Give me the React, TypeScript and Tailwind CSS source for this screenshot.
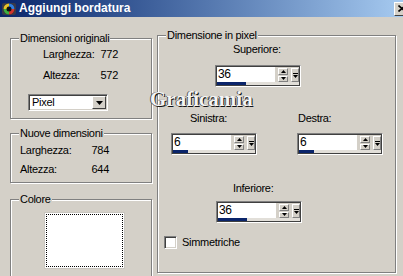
import type { ReactNode } from 'react';

const Group = ({ title, className, children }: { title: string; className: string; children?: ReactNode }) => (
  <div className={`relative border border-[#808080] shadow-[inset_1px_1px_0_#fff,1px_1px_0_#fff] ${className}`}>
    <span className="absolute left-[8px] top-[-7px] bg-[#d4d0c8] px-[1px] leading-[13px]">{title}</span>
    {children}
  </div>
);

const Tri = ({ up }: { up?: boolean }) => (
  <svg width="5" height="3" viewBox="0 0 5 3" className="block">
    <polygon points={up ? '2.5,0 5,3 0,3' : '0,0 5,0 2.5,3'} fill="#000" />
  </svg>
);

const SmallBtn = ({ up }: { up?: boolean }) => (
  <div className="h-[7px] flex items-center justify-center bg-[#d4d0c8] border border-t-white border-l-white border-r-[#808080] border-b-[#808080]">
    <Tri up={up} />
  </div>
);

const Spin = ({ value, fill }: { value: string; fill: number }) => (
  <div className="w-[86px] h-[22px] border border-t-[#808080] border-l-[#808080] border-r-white border-b-white shadow-[inset_1px_1px_0_#404040,inset_-1px_-1px_0_#404040] p-[1px] flex flex-col bg-[#d4d0c8]">
    <div className="h-[15px] flex">
      <div className="w-[58px] bg-white pl-[1px] text-[12px] leading-[15px]">{value}</div>
      <div className="w-[10px] ml-[3px] flex flex-col gap-[1px] pt-[1px]">
        <SmallBtn up />
        <SmallBtn />
      </div>
      <div className="w-[8px] ml-[3px] mt-[1px] h-[14px] flex flex-col items-center justify-center gap-[1px] bg-[#d4d0c8] border border-t-white border-l-white border-r-[#808080] border-b-[#808080]">
        <div className="w-[5px] h-[1px] bg-black" />
        <Tri />
      </div>
    </div>
    <div className="h-[3px] bg-[#e2dfd9] flex">
      <div className="h-full bg-[#0a246a]" style={{ width: fill }} />
    </div>
  </div>
);

const AppIcon = () => (
  <svg width="16" height="16" viewBox="0 0 16 16">
    <rect x="1" y="2" width="14" height="12" rx="2" fill="#3a3a48" />
    <circle cx="8" cy="8" r="5.5" fill="#1b1b24" />
    <path d="M8 2.5 A5.5 5.5 0 0 1 13.5 8 L8 8 Z" fill="#2f7de0" />
    <path d="M13.5 8 A5.5 5.5 0 0 1 8 13.5 L8 8 Z" fill="#d0342c" />
    <path d="M8 13.5 A5.5 5.5 0 0 1 2.5 8 L8 8 Z" fill="#3fae3f" />
    <path d="M2.5 8 A5.5 5.5 0 0 1 8 2.5 L8 8 Z" fill="#e8c22a" />
    <circle cx="8" cy="8" r="2.5" fill="#111" />
  </svg>
);

const ValueRow = ({ label, value, className }: { label: string; value: string; className: string }) => (
  <div className={`flex justify-between leading-[13px] ${className}`}>
    <span>{label}</span>
    <span>{value}</span>
  </div>
);

export default function App() {
  return (
    <div className="relative w-[403px] h-[276px] overflow-hidden bg-[#d4d0c8] text-black font-['Liberation_Sans',Arial,sans-serif] text-[11px] tracking-[-0.3px]">
      <div className="h-[17px] flex items-center bg-gradient-to-r from-[#0a246a] to-[#a6caf0]">
        <div className="ml-[1px]">
          <AppIcon />
        </div>
        <span className="ml-[2px] text-white font-bold text-[12px] tracking-normal leading-[17px]">Aggiungi bordatura</span>
        <div className="ml-auto mr-[-7px] w-[16px] h-[14px] flex items-center justify-center bg-[#d4d0c8] border border-t-white border-l-white border-r-[#404040] border-b-[#404040]">
          <svg width="8" height="7" viewBox="0 0 8 7">
            <path d="M0.5 0.5 L7.5 6.5 M7.5 0.5 L0.5 6.5" stroke="#000" strokeWidth="1.6" />
          </svg>
        </div>
      </div>

      <div className="flex pl-[10px] pt-[18px]">
        <div className="w-[142px] mt-[3px] flex flex-col">
          <Group title="Dimensioni originali" className="h-[81px] pt-[9px]">
            <ValueRow label="Larghezza:" value="772" className="ml-[32px] w-[75px]" />
            <ValueRow label="Altezza:" value="572" className="ml-[32px] w-[75px] mt-[8px]" />
            <div className="ml-[17px] mt-[12px] w-[80px] h-[17px] flex border border-t-[#808080] border-l-[#808080] border-r-white border-b-white shadow-[inset_1px_1px_0_#404040,inset_-1px_-1px_0_#d4d0c8] p-[1px] bg-white">
              <span className="flex-1 pl-[2px] leading-[13px]">Pixel</span>
              <div className="w-[14px] h-[13px] flex items-center justify-center bg-[#d4d0c8] border border-t-white border-l-white border-r-[#404040] border-b-[#404040]">
                <svg width="7" height="4" viewBox="0 0 7 4">
                  <polygon points="0,0 7,0 3.5,4" fill="#000" />
                </svg>
              </div>
            </div>
          </Group>

          <Group title="Nuove dimensioni" className="h-[50px] mt-[14px] pt-[10px]">
            <ValueRow label="Larghezza:" value="784" className="ml-[9px] w-[89px]" />
            <ValueRow label="Altezza:" value="644" className="ml-[9px] w-[89px] mt-[6px]" />
          </Group>

          <Group title="Colore" className="h-[90px] mt-[16px] pt-[12px]">
            <div className="ml-[33px] w-[81px] h-[57px] bg-white border border-[#c8c5bf] p-[1px]">
              <div className="w-full h-full border border-dotted border-black" />
            </div>
          </Group>
        </div>

        <Group title="Dimensione in pixel" className="ml-[5px] w-[239px] h-[238px] pt-[7px]">
          <div className="ml-[75px] leading-[13px]">Superiore:</div>
          <div className="ml-[57px] mt-[9px]">
            <Spin value="36" fill={29} />
          </div>

          <div className="flex mt-[25px]">
            <div className="ml-[13px] flex flex-col">
              <span className="ml-[19px] leading-[13px]">Sinistra:</span>
              <div className="mt-[8px]">
                <Spin value="6" fill={15} />
              </div>
            </div>
            <div className="ml-[40px] flex flex-col">
              <span className="ml-[1px] leading-[13px]">Destra:</span>
              <div className="mt-[8px]">
                <Spin value="6" fill={15} />
              </div>
            </div>
          </div>

          <div className="ml-[75px] mt-[27px] leading-[13px]">Inferiore:</div>
          <div className="ml-[58px] mt-[6px]">
            <Spin value="36" fill={29} />
          </div>

          <div className="flex items-center ml-[6px] mt-[13px]">
            <div className="w-[13px] h-[13px] bg-white border border-t-[#808080] border-l-[#808080] border-r-white border-b-white shadow-[inset_1px_1px_0_#404040,inset_-1px_-1px_0_#d4d0c8]" />
            <span className="ml-[5px] leading-[13px]">Simmetriche</span>
          </div>
        </Group>
      </div>

      <span className="absolute left-[150px] top-[88px] font-['Liberation_Serif',serif] font-bold text-[21px] leading-[22px] tracking-normal text-[#f4f4f4] [text-shadow:1px_1px_0_#111,-1px_0_0_#555]">
        Graficamia
      </span>
    </div>
  );
}
